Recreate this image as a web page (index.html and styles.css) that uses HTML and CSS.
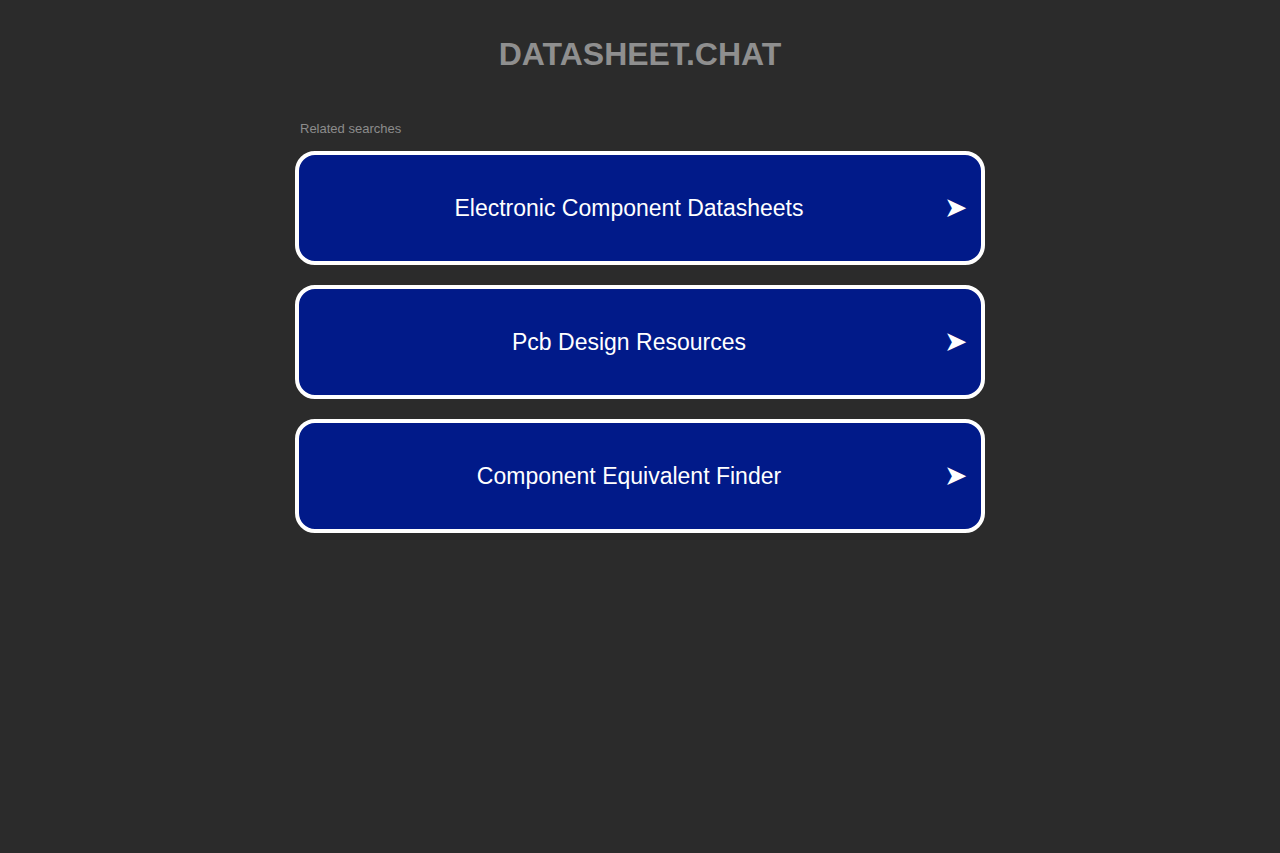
FILE: index.html
```html
<!DOCTYPE html>
<html>
<head>
<meta charset="utf-8">
<link rel="stylesheet" href="styles.css">
</head>
<body>
<header class="header">DATASHEET.CHAT</header>
<main class="content">
  <div class="label">Related searches</div>
  <ul class="links">
    <li><a class="card" href="#"><span class="card-text">Electronic Component Datasheets</span><span class="arrow">➤</span></a></li>
    <li><a class="card" href="#"><span class="card-text">Pcb Design Resources</span><span class="arrow">➤</span></a></li>
    <li><a class="card" href="#"><span class="card-text">Component Equivalent Finder</span><span class="arrow">➤</span></a></li>
  </ul>
</main>
</body>
</html>
```
FILE: styles.css
```css
html, body {
  margin: 0;
  padding: 0;
  background: #2b2b2b;
  font-family: "Liberation Sans", Arial, sans-serif;
}
.header {
  text-align: center;
  font-weight: bold;
  font-size: 32px;
  color: #8f8f8f;
  padding-top: 36px;
  line-height: 37px;
}
.content {
  width: 690px;
  margin: 0 auto;
  padding-top: 48px;
}
.label {
  font-size: 13px;
  color: #8c8c8c;
  padding-left: 5px;
  line-height: 16px;
}
.links {
  list-style: none;
  margin: 14px 0 0 0;
  padding: 0;
  display: flex;
  flex-direction: column;
  gap: 20px;
}
.card {
  box-sizing: border-box;
  height: 114px;
  border: 4px solid #ffffff;
  border-radius: 20px;
  background: #011a89;
  color: #ffffff;
  text-decoration: none;
  display: flex;
  align-items: center;
  padding: 0 15px;
}
.card-text {
  flex: 1;
  text-align: center;
  font-size: 23px;
}
.arrow {
  font-family: "DejaVu Sans", sans-serif;
  font-size: 28px;
  line-height: 1;
  width: 22px;
}
```
